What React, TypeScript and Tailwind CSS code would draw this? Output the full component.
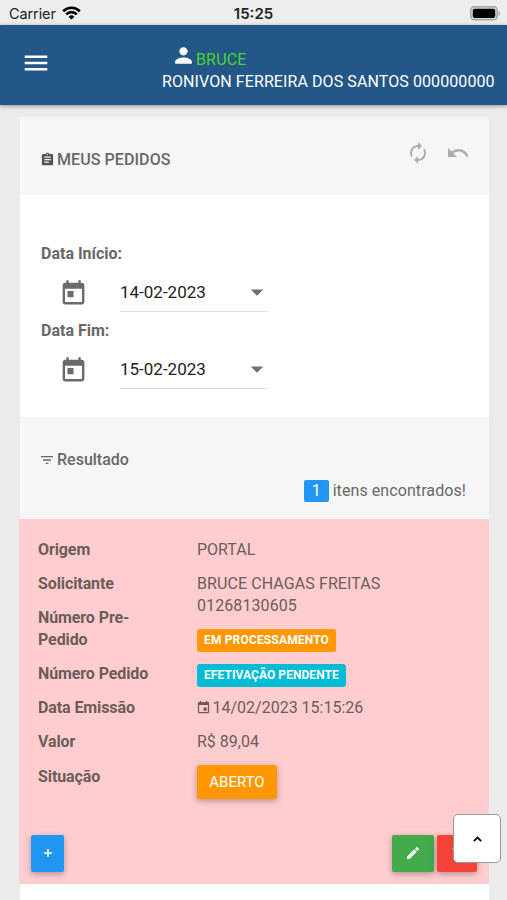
import React, { FC, ReactNode } from 'react'
import {
  MdArrowDropDown,
  MdAssignment,
  MdAutorenew,
  MdDelete,
  MdEdit,
  MdEvent,
  MdFilterList,
  MdMenu,
  MdPerson,
  MdToday,
  MdUndo,
} from 'react-icons/md'

const labels = ['Origem', 'Solicitante', 'Número Pre-Pedido', 'Número Pedido', 'Data Emissão', 'Valor', 'Situação']

const StatusBar: FC = () => (
  <div className="relative h-[25px] bg-[#ededed] flex items-center justify-between pl-[9px] pr-[6px] font-['Inter',sans-serif] text-black">
    <div className="flex items-center gap-[6px] pt-[3px]">
      <span className="text-[14.5px] leading-5 tracking-[-0.1px] text-[#222]">Carrier</span>
      <svg width="19" height="14" viewBox="0 0 19 14" fill="none" stroke="black" strokeWidth="2.7" className="-mt-[2px]">
        <path d="M1.2 5.2a11.7 11.7 0 0 1 16.6 0" />
        <path d="M4.2 8.4a7.5 7.5 0 0 1 10.6 0" />
        <path d="M9.5 13.6 6.6 10.7a4.1 4.1 0 0 1 5.8 0z" fill="black" stroke="none" />
      </svg>
    </div>
    <span className="absolute left-1/2 top-[4px] -translate-x-1/2 text-[15px] leading-5 font-semibold text-[#222]">15:25</span>
    <svg width="31" height="15" viewBox="0 0 31 15" className="mt-px">
      <rect x="0.8" y="0.8" width="26.4" height="13" rx="3.6" fill="#d5d5d5" stroke="#a5a5a5" strokeWidth="1.4" />
      <rect x="2.8" y="2.7" width="22.4" height="9.2" rx="1.8" fill="black" />
      <path d="M28.5 5c1.8.6 1.8 4.2 0 4.8z" fill="#a5a5a5" />
    </svg>
  </div>
)

const DateField: FC<{ label: string; value: string }> = ({ label, value }) => (
  <div className="h-[77px]">
    <p className="font-bold text-[#686868] leading-[22px]">{label}</p>
    <div className="flex h-[48px] mt-[-1px]">
      <MdToday className="ml-[17.5px] mt-[15px] size-[29px] text-[#6b6b6b]" />
      <div className="ml-[32.5px] mt-[11px] w-[147px] h-[37px] border-b border-[#dedede] flex items-center justify-between text-[17px] text-[#222]">
        <span className="-mt-[2px]">{value}</span>
        <MdArrowDropDown className="size-[30px] -mr-[5px] -mt-[3px] text-[#707070]" />
      </div>
    </div>
  </div>
)

const Tag: FC<{ className: string; children: ReactNode }> = ({ className, children }) => (
  <div className="h-[22px] flex items-center">
    <span className={`${className} mt-[2px] h-[23px] shrink-0 px-[7px] rounded-[3px] text-[12px] leading-[23px] font-bold text-white whitespace-nowrap`}>
      {children}
    </span>
  </div>
)

const App: FC = () => {
  return (
    <div className="w-full h-[900px] overflow-hidden bg-[#ebebeb] font-['Roboto',sans-serif] text-[16px] leading-[22px] text-[#686868]">
      <StatusBar />
      <header className="relative h-[80px] bg-[#235787] text-white shadow-[0_1px_4px_rgba(0,0,0,0.4)] flex justify-between pl-[21px] pr-[12px]">
        <MdMenu className="mt-[23px] size-[30px]" />
        <div className="w-[332px] pt-[19px]">
          <div className="flex items-center ml-[8px] h-[27px]">
            <MdPerson className="size-[25px] -mt-[5px]" />
            <span className="mt-[5px] text-[#46d52f] tracking-[0.15px]">BRUCE</span>
          </div>
          <p className="-ml-px whitespace-nowrap tracking-[0.09px]">RONIVON FERREIRA DOS SANTOS 000000000</p>
        </div>
      </header>

      <main className="ml-[20px] mr-[18px] mt-[12px] bg-white h-[800px]">
        <div className="h-[78px] bg-[#f6f6f6] flex justify-between pl-[20px] pr-[19px]">
          <h1 className="mt-[32px] h-[22px] flex items-center font-medium tracking-[0.08px]">
            <MdAssignment className="size-[15px] mr-[2px] -mt-px text-[#555]" />
            MEUS PEDIDOS
          </h1>
          <div className="flex gap-[16px] pt-[24px] text-[#adadad]">
            <MdAutorenew className="size-[24px]" />
            <MdUndo className="size-[24px]" />
          </div>
        </div>

        <div className="h-[222px] pt-[48px] pl-[21px]">
          <DateField label="Data Início:" value="14-02-2023" />
          <DateField label="Data Fim:" value="15-02-2023" />
        </div>

        <div className="h-[102px] bg-[#f6f6f6] pt-[32px] pl-[20px] pr-[23px]">
          <h2 className="flex items-center font-medium">
            <MdFilterList className="size-[16px] -ml-px mr-[2px] -mt-px" />
            Resultado
          </h2>
          <div className="flex items-center justify-end mt-[9px] gap-[4px]">
            <span className="w-[25px] h-[22px] rounded-[2px] bg-[#2196f3] text-white text-center">1</span>
            <span className="tracking-[0.08px]">itens encontrados!</span>
          </div>
        </div>

        <section className="h-[365px] -ml-px bg-[#ffcdd0] pt-[19.5px] text-[#6d5c58]">
          <div className="flex h-[297px] pl-[19px]">
            <div className="w-[159px] flex flex-col gap-[12.2px] font-bold tracking-[-0.1px]">
              {labels.map((label) => (
                <p key={label} className="w-[125px]">{label}</p>
              ))}
            </div>
            <div className="flex flex-col items-start gap-[12.2px]">
              <p>PORTAL</p>
              <p className="tracking-[0.09px]">BRUCE CHAGAS FREITAS<br />01268130605</p>
              <Tag className="bg-[#ff9800] tracking-[0.16px]">EM PROCESSAMENTO</Tag>
              <Tag className="bg-[#00bcd4] tracking-[0.07px]">EFETIVAÇÃO PENDENTE</Tag>
              <p className="flex items-center">
                <MdEvent className="size-[15px] -ml-[1.5px] mr-[2px] -mt-px" />
                14/02/2023 15:15:26
              </p>
              <p>R$ 89,04</p>
              <button className="h-[34px] w-[80px] -mt-px rounded-[2px] bg-[#ff9800] text-[15px] text-white shadow-[0_2px_6px_rgba(0,0,0,0.3)]">
                ABERTO
              </button>
            </div>
          </div>
          <div className="flex -mt-px pl-[12px] pr-[12px] text-white">
            <button className="mr-auto h-[37px] w-[33px] flex items-center justify-center rounded-[2px] bg-[#2196f3] shadow-[0_2px_6px_rgba(0,0,0,0.3)]">
              <svg className="size-[8px]" viewBox="0 0 8 8" stroke="currentColor" strokeWidth="1.5">
                <path d="M4 0v8M0 4h8" />
              </svg>
            </button>
            <button className="mr-[3px] h-[37px] w-[42px] flex items-center justify-center rounded-[2px] bg-[#43ab4b] shadow-[0_2px_6px_rgba(0,0,0,0.3)]">
              <MdEdit className="size-[16px]" />
            </button>
            <button className="h-[37px] w-[40px] flex items-center justify-center rounded-[2px] bg-[#f44336] shadow-[0_2px_6px_rgba(0,0,0,0.3)]">
              <MdDelete className="size-[16px]" />
            </button>
          </div>
        </section>
      </main>

      <button className="fixed left-[453px] top-[814px] w-[48px] h-[49px] flex items-center justify-center rounded-[5px] border border-[#999] bg-white text-black">
        <svg className="w-[9px] h-[6px]" viewBox="0 0 9 6" fill="none" stroke="currentColor" strokeWidth="1.8">
          <path d="M0.8 5.1 4.5 1.5 8.2 5.1" />
        </svg>
      </button>
    </div>
  )
}

export default App
